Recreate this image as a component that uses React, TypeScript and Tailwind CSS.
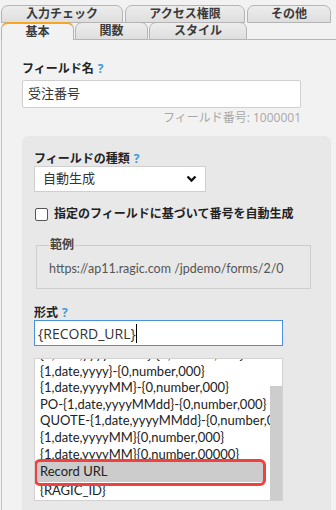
const font = { fontFamily: '"Open Sans", "Noto Sans CJK JP", sans-serif' };
const lato = { fontFamily: 'Lato, "Noto Sans CJK JP", sans-serif' };

const Help = () => <span className="ml-[4px] text-[#3d9ad9] font-bold">?</span>;

const Tab = ({
  label,
  width,
  active = false,
}: {
  label: string;
  width: string;
  active?: boolean;
}) => (
  <div
    className={`${width} h-full flex items-center justify-center rounded-t-[7px] border border-[#b4b4b4] text-[12px] font-bold text-[#3a3a3a] ${
      active
        ? "bg-[#f2f2f2] border-t-2 border-t-[#f5a623] border-b-0"
        : "bg-gradient-to-b from-[#ededed] to-[#dedede]"
    }`}
  >
    {label}
  </div>
);

const formats = [
  "{1,date,yyyyMMdd}-{0,number,000}",
  "{1,date,yyyy}-{0,number,000}",
  "{1,date,yyyyMM}-{0,number,000}",
  "PO-{1,date,yyyyMMdd}-{0,number,000}",
  "QUOTE-{1,date,yyyyMMdd}-{0,number,000}",
  "{1,date,yyyyMM}{0,number,000}",
  "{1,date,yyyyMM}{0,number,00000}",
];

export default function App() {
  return (
    <div className="w-[336px] h-[510px] bg-[#f2f2f2] overflow-hidden text-[#333]" style={font}>
      {/* tabs */}
      <div className="pt-[5px] pl-[1px]">
        <div className="flex h-[18px] gap-[2px]">
          <Tab label="入力チェック" width="w-[122px]" />
          <Tab label="アクセス権限" width="w-[120px]" />
          <Tab label="その他" width="w-[84px]" />
        </div>
        <div className="flex h-[18px] -mt-[1px]">
          <Tab label="基本" width="w-[73px]" active />
          <div className="w-[1px] border-b border-[#b4b4b4]" />
          <Tab label="関数" width="w-[73px]" />
          <div className="w-[1px] border-b border-[#b4b4b4]" />
          <Tab label="スタイル" width="w-[98px]" />
          <div className="flex-1 border-b border-[#b4b4b4]" />
        </div>
      </div>

      {/* content */}
      <div className="ml-[1px] h-full border-l border-[#c4c4c4] pl-[20px] pt-[22px]">
        <div className="text-[12px] font-bold leading-[14px] text-[#222]">
          フィールド名
          <Help />
        </div>
        <div className="mt-[4px] w-[279px] h-[28px] bg-white border border-[#cfcfcf] rounded-[2px] flex items-center pl-[5px] text-[13px] text-[#333]">
          受注番号
        </div>
        <div className="w-[279px] text-right text-[12px] leading-[16px] text-[#a8a8a8] mt-[2px]">
          フィールド番号: 1000001
        </div>

        {/* gray panel */}
        <div className="mt-[10px] w-[309px] h-[400px] bg-[#e8e8e8] rounded-[6px] pl-[12px] pt-[16px]">
          <div className="text-[12px] font-bold leading-[14px] text-[#222]">
            フィールドの種類
            <Help />
          </div>
          <div className="w-[172px] h-[26px] bg-white border border-[#cfcfcf] flex items-center justify-between pl-[8px] pr-[8px] text-[13px]">
            <span>自動生成</span>
            <svg width="11" height="8" viewBox="0 0 11 8">
              <polyline points="1.5,1.5 5.5,5.5 9.5,1.5" fill="none" stroke="#111" strokeWidth="2.4" />
            </svg>
          </div>

          <div className="mt-[12px] h-[20px] flex items-center">
            <div className="ml-[1px] w-[13px] h-[13px] bg-white border border-[#555] rounded-[2px]" />
            <span className="ml-[6px] text-[12px] font-bold text-[#222]">
              指定のフィールドに基づいて番号を自動生成
            </span>
          </div>

          <fieldset className="mt-[14px] ml-[2px] w-[275px] border border-[#cdcdcd] px-[12px] pt-[7px] pb-[9px]">
            <legend className="px-[1px] text-[12px] leading-[14px] font-bold text-[#444]">範例</legend>
            <div className="text-[12.5px] leading-[20px] text-[#555] whitespace-nowrap" style={lato}>
              https://ap11.ragic.com /jpdemo/forms/2/0
            </div>
          </fieldset>

          <div className="mt-[17px] text-[12px] font-bold leading-[14px] text-[#222]">
            形式
            <Help />
          </div>
          <div className="w-[249px] h-[26px] bg-white border border-[#4a90d9] flex items-center pl-[3px] text-[14px] text-[#333]">
            <span>{"{RECORD_URL}"}</span>
            <span className="w-[1px] h-[19px] bg-black" />
          </div>

          {/* list */}
          <div
            className="relative mt-[12px] w-[249px] h-[143px] bg-white border border-[#d2d2d2] overflow-hidden text-[13px] text-[#222]"
            style={lato}
          >
            <div className="-mt-[13px] mr-[12px] overflow-hidden whitespace-nowrap">
              {formats.map((f) => (
                <div key={f} className="h-[16.6px] leading-[16.6px] pl-[5px]">
                  {f}
                </div>
              ))}
              <div className="h-[19.6px] leading-[19.6px] pl-[3px] ml-[2px] w-[226px] bg-[#cccccc]">
                Record URL
              </div>
              <div className="h-[16.6px] leading-[16.6px] pl-[5px]">{"{RAGIC_ID}"}</div>
            </div>
            <div className="absolute right-0 top-[27px] bottom-0 w-[12px] bg-[#cdcdcd]" />
            <div className="absolute left-[-1px] top-[100px] w-[232px] h-[27px] border-[3px] border-[#f23f3f] rounded-[6px]" />
          </div>
        </div>
      </div>
    </div>
  );
}
